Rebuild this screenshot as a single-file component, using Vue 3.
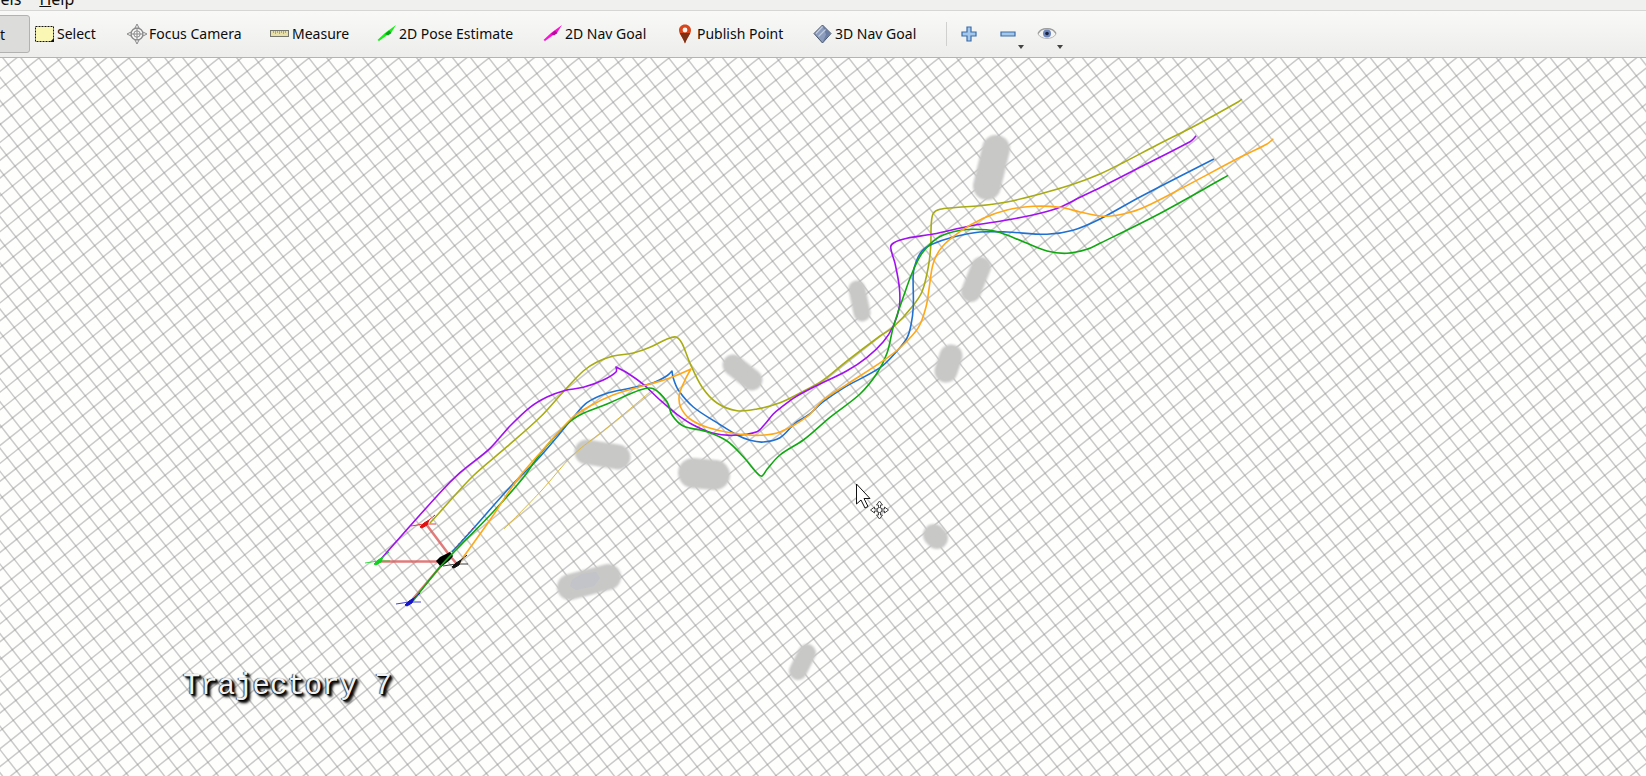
<script setup>
const ORIGIN = [39, 58]
const U = [8.57, 11.04]
const V = [11.14, -8.83]

// Parallel grid lines: step along one lattice vector, draw along the other.
function gridLines(dir, step) {
  let d = ''
  for (let i = -170; i <= 170; i++) {
    const x = ORIGIN[0] + step[0] * i
    const y = ORIGIN[1] + step[1] * i
    d += `M${(x - dir[0] * 220).toFixed(1)} ${(y - dir[1] * 220).toFixed(1)}L${(x + dir[0] * 220).toFixed(1)} ${(y + dir[1] * 220).toFixed(1)}`
  }
  return d
}
const gridA = gridLines(U, V)
const gridB = gridLines(V, U)

// Catmull-Rom spline through the points; "|" marks a sharp corner.
function spline(text) {
  let out = ''
  const parts = text.split('|').map(p => p.trim().split(/\s+/).map(s => s.split(',').map(Number)))
  parts.forEach((p, k) => {
    const pts = k ? [parts[k - 1][parts[k - 1].length - 1], ...p] : p
    if (!k) out += `M${pts[0]}`
    for (let i = 0; i < pts.length - 1; i++) {
      const a = pts[i - 1] || pts[i]
      const b = pts[i]
      const c = pts[i + 1]
      const e = pts[i + 2] || c
      const len = (m, n) => Math.hypot(n[0] - m[0], n[1] - m[1]) || 1
      const s = len(b, c)
      const t1 = s / (s + len(a, b)) / 3 * (a === b ? 0 : 1)
      const t2 = s / (s + len(c, e)) / 3 * (c === e ? 0 : 1)
      const c1 = [b[0] + (c[0] - a[0]) * t1, b[1] + (c[1] - a[1]) * t1]
      const c2 = [c[0] - (e[0] - b[0]) * t2, c[1] - (e[1] - b[1]) * t2]
      out += `C${c1.map(n => n.toFixed(1))} ${c2.map(n => n.toFixed(1))} ${c}`
    }
  })
  return out
}

const trajectories = [
  { name: 'olive', color: '#a8ab12', pts: '430,523 440,512 473,476 507,446.700 540,417.300 564,391 583.300,371 597,362 613.300,356 633.300,353 650,347.300 667,339 676,337 682,343.300 690,363.300 702,387 717,403 737,410.700 757,409 780,402.700 800,393 822,381 847,361 880,336 894,326.500 911.700,307.300 922,291.700 928.300,267 930.700,247 931.300,223.300 933.300,213.300 940,209.300 953.300,207.700 980,205.700 1007,202 1040,194 1073,184.300 1100,174 1123,162.700 1157,145 1197,124.700 1238,102 1242,99' },
  { name: 'blue', color: '#2070d0', pts: '452,552 472,530 512,485 537,460 557,437 573.300,417.300 587,402.700 607,393.300 630,388.300 653.300,382.700 667,375.700 672,371 | 673.300,378.300 678.300,390 693.300,407 717,422.700 737,435 750,440.300 763.300,442 780,437.700 795,423.300 808.300,415 823.300,401.700 843.300,388 880,367.700 897,351 907,338 911,325 913.300,307 913.300,273.300 916,262 922,251 932,244.300 953.300,237 980,232 1007,232 1047,234.300 1073,230.300 1100,219 1140,197 1214,159' },
  { name: 'purple', color: '#a010f0', pts: '381,559 440,492.700 460,472.700 490,448.300 510,426 530,407.300 547,397 564,390.700 583.300,387.300 603.300,380 616,372 616,367 | 627,372.700 643.300,384.300 660,400 677,414.300 693.300,425 713.300,433.300 733.300,435.300 757,431.700 765,424 773.300,414 780,408.300 793.300,398.300 813.300,387.300 847,370.700 867,357.300 883.300,341.700 893.300,326 899.300,307 899.300,287 895,263.300 890.700,247.300 894,242.700 907,238.300 933.300,234 970,226 1007,220 1040,213.300 1060,207.300 1080,197.300 1100,187.700 1140,167.300 1190,141.700 1194,138.300 1196,135.700' },
  { name: 'green', color: '#10a810', pts: '413,601 440,567 457,549 493,512 523,478 540,454 567,424 583.300,413.300 607,404 640,390 653.300,388.700 667,401.700 672,415 683.300,426 707,431.700 727,441 743.300,456.700 757,473 762,476 767,469.300 780,455 803.300,440 830,417.300 860,394 877,373.300 887,353.300 893.300,327 903.300,297 912,273.300 922,253.300 937,238.300 953.300,231.700 973.300,229.300 997,231.700 1023.300,241.700 1047,251 1067,253.300 1087,249.300 1100,243.300 1157,215 1223,178.300 1228,175.300' },
  { name: 'orange', color: '#ffa818', pts: '459,563 467,552 490,520 517,480 540,453 573,417 590,406 613,395 640,386.700 667,379 691,369 | 685,380 679.300,395 680.700,407.300 690,419 707,427.300 733.300,433.300 760,435.300 780,432 807,416.700 823.300,400 847,384.300 883.300,360.700 902,346 918.300,327.700 926,307 929.300,287 933.300,263.300 942,247 960,231.700 983.300,218.300 1007,210 1033.300,206.300 1060,207.300 1080,212 1100,216 1117,215.300 1140,209 1173.300,192.700 1240,157.300 1267,144 1273.300,138.700' }
].map(t => ({ ...t, d: spline(t.pts) }))
const plannedPath = spline('504,529 542,490 573,455 607,428 650,392')

const obstacles = [
  { a: [996, 149], b: [987, 186], w: 28 },
  { a: [981, 267], b: [971, 292], w: 20 },
  { a: [857, 289], b: [862, 313], w: 17 },
  { a: [951, 356], b: [946, 371], w: 23 },
  { a: [733, 365], b: [752, 380], w: 21 },
  { a: [587, 452], b: [618, 457], w: 25 },
  { a: [693, 473], b: [715, 475], w: 30 },
  { a: [934, 535], b: [937, 538], w: 22 },
  { a: [570, 587], b: [608, 577], w: 26 },
  { a: [807, 653], b: [798, 671], w: 18 }
]

const markers = [
  { color: '#e01010', x: 424, y: 525 },
  { color: '#10d020', x: 378, y: 562 },
  { color: '#1414c8', x: 409, y: 603 },
  { color: '#101010', x: 456, y: 565 }
]

const tools = [
  { id: 'select', label: 'Select' },
  { id: 'focus', label: 'Focus Camera' },
  { id: 'measure', label: 'Measure' },
  { id: 'pose', label: '2D Pose Estimate' },
  { id: 'nav', label: '2D Nav Goal' },
  { id: 'point', label: 'Publish Point' },
  { id: 'nav3', label: '3D Nav Goal' }
]
</script>

<template>
  <div class="window">
    <nav class="menubar" aria-label="Menu">
      <button class="menu" type="button">Panels</button>
      <button class="menu" type="button"><u>H</u>elp</button>
    </nav>

    <header class="toolbar">
      <button class="interact" type="button" aria-pressed="true">Interact</button>
      <button v-for="t in tools" :key="t.id" class="tool" :class="t.id" type="button">
        <svg class="icon" viewBox="0 0 20 20" aria-hidden="true">
          <template v-if="t.id === 'select'">
            <rect x="0.500" y="2.500" width="18" height="15" fill="#faf6b4" />
            <rect x="0.500" y="2.500" width="18" height="15" fill="none" stroke="#111" stroke-dasharray="2 1" />
            <path d="M19 14v4h-4z" fill="#111" />
          </template>
          <g v-else-if="t.id === 'focus'" fill="none" stroke="#8a8a8a">
            <circle cx="10" cy="10" r="6" fill="#f8f8f8" stroke-width="1.300" />
            <circle cx="10" cy="10" r="3.200" />
            <path d="M4 10h12M10 4v12" />
            <path d="M10 0l2 4h-4zM10 20l2-4h-4zM0 10l4-2v4zM20 10l-4-2v4z" fill="#eee" />
          </g>
          <template v-else-if="t.id === 'measure'">
            <rect x="0.500" y="6.500" width="18" height="6" fill="#e8e0a8" stroke="#77766c" />
            <path d="M3.500 7v2M5.500 7v3M7.500 7v2M9.500 7v3M11.500 7v2M13.500 7v3M15.500 7v2" stroke="#8d8b70" stroke-width=".700" />
          </template>
          <g v-else-if="t.id === 'pose' || t.id === 'nav'" :fill="t.id === 'pose' ? '#14f014' : '#ff10d8'">
            <path d="M0.500 16L8 9l2-1.500L19 1 14 9l-3 1.500L2 17z" />
            <path d="M8 10l4-3.500 2.500 2.500-3.500 2.500z" :fill="t.id === 'pose' ? '#10a020' : '#b01098'" />
          </g>
          <template v-else-if="t.id === 'point'">
            <path d="M10 .500C6.500.500 4 3 4 6.300c0 3.700 3.500 6.500 6 13.200 2.500-6.700 6-9.500 6-13.200C16 3 13.500.500 10 .500z" fill="#d8461c" />
            <path d="M4.800 9C6 12 8.500 15 10 19.500 11.500 15 14 12 15.200 9z" fill="#7c3014" />
            <circle cx="10" cy="6" r="2.400" fill="#f8f4f0" />
          </template>
          <template v-else>
            <path d="M9.500 1L18 9.500 9.500 19 1 9.500z" fill="#8c9cbc" stroke="#46546c" />
            <path d="M9.500 1.500L13 10.500 9.500 18.500 17.500 9.500z" fill="#6c7ea4" />
            <path d="M3 9.500l6.500-7M5.500 12.500l7-7" stroke="#c2cce0" stroke-width="1.200" />
          </template>
        </svg>
        <span>{{ t.label }}</span>
      </button>
      <span class="separator"></span>
      <button class="mini" type="button" aria-label="Add">
        <svg class="icon" viewBox="0 0 20 20"><path d="M8 3h4v5h5v4h-5v5H8v-5H3V8h5z" fill="#a4c8ec" stroke="#3a6ca8" stroke-width="1.200" /></svg>
      </button>
      <button class="mini" type="button" aria-label="Remove">
        <svg class="icon" viewBox="0 0 20 20"><path d="M3 8h14v4H3z" fill="#a4c8ec" stroke="#3a6ca8" stroke-width="1.200" /></svg>
        <svg class="caret" viewBox="0 0 6 4"><path d="M0 0h6L3 4z" fill="#444" /></svg>
      </button>
      <button class="mini" type="button" aria-label="Views">
        <svg class="icon" viewBox="0 0 20 20">
          <path d="M1 10C4 3 16 3 19 10 16 16 4 16 1 10z" fill="#f4f4f2" stroke="#b8b8b8" />
          <path d="M1 9.500C4 3 16 3 19 9.500" fill="none" stroke="#9c9c9c" stroke-width="1.300" />
          <circle cx="10" cy="9.500" r="4" fill="#6c86bc" />
          <circle cx="10" cy="9.500" r="1.800" fill="#1a2440" />
        </svg>
        <svg class="caret" viewBox="0 0 6 4"><path d="M0 0h6L3 4z" fill="#444" /></svg>
      </button>
    </header>

    <main class="view">
      <svg class="scene" role="img" aria-label="Planned trajectories around obstacles">
        <g transform="translate(0 -58)">
          <g class="grid">
            <path :d="gridA" />
            <path :d="gridB" />
          </g>
          <g class="obstacles">
            <line v-for="(o, i) in obstacles" :key="i" :x1="o.a[0]" :y1="o.a[1]" :x2="o.b[0]" :y2="o.b[1]" :stroke-width="o.w" />
          </g>
          <path d="M572 580l10-6 14-2 4 6-6 8-18 4-6-4z" fill="#bcc0cc" opacity=".500" />
          <path :d="plannedPath" fill="none" stroke="#dcb840" stroke-width="1" />
          <path class="links" d="M450 556L426 524M379 561.500h61M441 566L412 600M450 556l7 8" />
          <path d="M436 561l4-4 10-5 3 4-3 4-9 7z" fill="#000" />
          <g class="paths">
            <path v-for="t in trajectories" :key="t.name" :d="t.d" :stroke="t.color" />
          </g>
          <path d="M455 548l20-22" stroke="#b03060" stroke-width="1" stroke-dasharray="2 3" />
          <g v-for="m in markers" :key="m.color" :transform="`translate(${m.x} ${m.y})`" :stroke="m.color" :fill="m.color">
            <path d="M-13 1L0-1 12-1" stroke-width="1" fill="none" opacity=".800" />
            <path d="M-3 2L11-10" stroke-width="1" stroke-dasharray="4 1" />
            <path d="M-4 2L0-2 5-5 3 0-2 3z" stroke-width="1" />
          </g>
          <g>
            <path d="M856.500 484v20l4.500-4 4 8 3-1.500-4-8h6z" fill="#fff" stroke="#111" />
            <g fill="#fff" stroke="#444">
              <path d="M879.500 501l3 4h-2v4h4v-2l4 3-4 3v-2h-4v4h2l-3 4-3-4h2v-4h-4v2l-4-3 4-3v2h4v-4h-2z" />
              <circle cx="879.500" cy="510" r="2.500" />
            </g>
          </g>
        </g>
      </svg>
      <p class="caption">Trajectory 7</p>
    </main>
  </div>
</template>

<style>
body { background: #fefefd; }
</style>

<style scoped>
.window {
  display: flex;
  flex-direction: column;
  height: 100vh;
  overflow: hidden;
  font-family: "Noto Sans", "Open Sans", sans-serif;
  font-size: 14px;
  color: #0c0c0c;
}
button {
  margin: 0;
  padding: 0;
  border: 0;
  background: none;
  font: inherit;
  color: inherit;
  white-space: nowrap;
}
.menubar {
  display: flex;
  flex: none;
  align-items: flex-end;
  gap: 18px;
  height: 10px;
  overflow: hidden;
  background: #f0f0ee;
  border-bottom: 1px solid #d6d6d4;
}
.menu { font-size: 16px; line-height: 22px; }
.menu:first-child { margin-left: -28px; }
.toolbar {
  display: flex;
  flex: none;
  align-items: center;
  height: 46px;
  background: linear-gradient(#f9f9f8, #ededeb);
  border-bottom: 1px solid #b4b4b2;
}
.interact {
  flex: none;
  width: 90px;
  height: 38px;
  margin-left: -60px;
  margin-right: 5px;
  padding-right: 24px;
  text-align: right;
  background: #dcdcda;
  border: 1px solid #b2b2b0;
  border-radius: 3px;
}
.tool {
  display: flex;
  flex: none;
  align-items: center;
  gap: 2px;
  line-height: 20px;
}
.icon { display: block; flex: none; width: 20px; height: 20px; }
.select { width: 92px; }
.focus { width: 143px; }
.measure { width: 107px; }
.pose { width: 166px; }
.nav { width: 132px; }
.point { width: 138px; }
.nav3 { width: 133px; }
.separator { width: 1px; height: 24px; margin-right: 10px; background: #d0d0ce; }
.mini { position: relative; width: 26px; margin-right: 13px; padding: 0 3px; }
.separator + .mini { margin-left: -1px; }
.caret { position: absolute; right: -3px; bottom: -5px; width: 6px; height: 4px; }
.view {
  position: relative;
  flex: 1;
  min-height: 0;
  overflow: hidden;
  background: #fefefd;
}
.scene { display: block; width: 100%; height: 100%; }
.grid path { fill: none; stroke: #8c8c8c; stroke-width: 1.500; opacity: .45; }
.obstacles line { stroke: #c8c8c7; stroke-linecap: round; filter: blur(1px); }
.links { fill: none; stroke: #dc6464; stroke-width: 2.500; opacity: .85; }
.paths path { fill: none; stroke-width: 1.600; stroke-linejoin: round; }
.caption {
  position: absolute;
  left: 183px;
  bottom: 71px;
  margin: 0;
  font: 29px/36px "Liberation Mono", monospace;
  color: #f2f2f2;
  text-shadow: 2px 2px 2px #000, 1px 1px 1px #000, -1px 0 1px #444, 3px 3px 3px #000;
}
</style>
